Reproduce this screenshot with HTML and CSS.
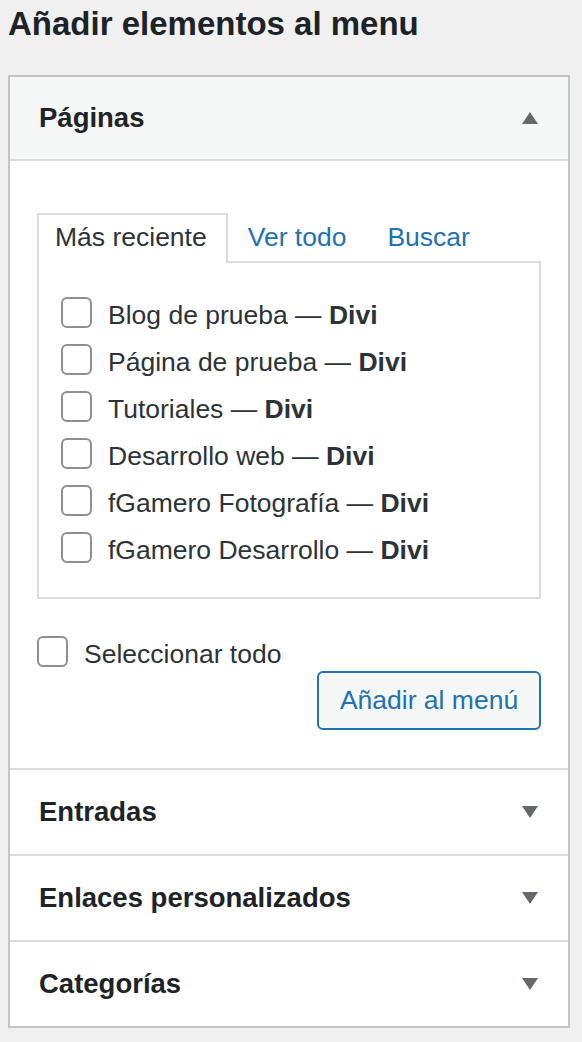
FILE: index.html
```html
<!DOCTYPE html>
<html lang="es">
<head>
<meta charset="utf-8">
<title>Añadir elementos al menu</title>
<link rel="stylesheet" href="styles.css">
</head>
<body>
<h1 class="title">Añadir elementos al menu</h1>
<div class="panel">
  <section class="section open">
    <div class="section-head head-open">
      <h3 class="section-title">Páginas</h3>
      <span class="arrow up"></span>
    </div>
    <div class="section-body">
      <div class="tabs">
        <span class="tab active">Más reciente</span>
        <a class="tab-link first" href="#">Ver todo</a>
        <a class="tab-link second" href="#">Buscar</a>
      </div>
      <div class="tab-panel">
        <ul class="list">
          <li class="item"><span class="box"></span><span class="label">Blog de prueba — <b>Divi</b></span></li>
          <li class="item"><span class="box"></span><span class="label">Página de prueba — <b>Divi</b></span></li>
          <li class="item"><span class="box"></span><span class="label">Tutoriales — <b>Divi</b></span></li>
          <li class="item"><span class="box"></span><span class="label">Desarrollo web — <b>Divi</b></span></li>
          <li class="item"><span class="box"></span><span class="label">fGamero Fotografía — <b>Divi</b></span></li>
          <li class="item"><span class="box"></span><span class="label">fGamero Desarrollo — <b>Divi</b></span></li>
        </ul>
      </div>
      <div class="select-all"><span class="box"></span><span class="label">Seleccionar todo</span></div>
      <div class="actions"><button class="button">Añadir al menú</button></div>
    </div>
  </section>
  <section class="section">
    <div class="section-head">
      <h3 class="section-title">Entradas</h3>
      <span class="arrow down"></span>
    </div>
  </section>
  <section class="section">
    <div class="section-head">
      <h3 class="section-title">Enlaces personalizados</h3>
      <span class="arrow down"></span>
    </div>
  </section>
  <section class="section last">
    <div class="section-head">
      <h3 class="section-title">Categorías</h3>
      <span class="arrow down"></span>
    </div>
  </section>
</div>
</body>
</html>
```
FILE: styles.css
```css
* { box-sizing: border-box; }

body {
  margin: 0;
  background: #f0f0f1;
  font-family: "Liberation Sans", Arial, sans-serif;
  color: #1d2327;
}

.title {
  margin: 0;
  padding: 7px 0 0 8px;
  font-size: 33px;
  line-height: 33px;
  font-weight: 700;
  color: #1d2327;
}

.panel {
  margin: 35px 0 0 8px;
  width: 562px;
  border: 2px solid #c3c4c7;
  background: #fff;
}

.section {
  border-bottom: 2px solid #dcdcde;
}

.section.last {
  border-bottom: none;
}

.section-head {
  height: 84px;
  display: flex;
  align-items: center;
  justify-content: space-between;
  padding: 0 30px 0 29px;
}

.head-open {
  height: 84px;
  background: #f6f7f7;
  border-bottom: 2px solid #dcdcde;
}

.section-title {
  margin: 0;
  font-size: 27.5px;
  font-weight: 700;
  color: #1d2327;
}

.arrow {
  width: 0;
  height: 0;
  border-left: 8px solid transparent;
  border-right: 8px solid transparent;
}

.arrow.up {
  border-bottom: 12px solid #646970;
}

.arrow.down {
  border-top: 12px solid #646970;
}

.section-body {
  padding: 52px 27px 38px 27px;
}

.tabs {
  display: flex;
  align-items: flex-start;
  height: 50px;
  position: relative;
  z-index: 1;
  margin-bottom: -2px;
}

.tab {
  height: 50px;
  display: flex;
  align-items: center;
  padding: 0 19px 3px 16px;
  border: 2px solid #dcdcde;
  border-bottom: none;
  background: #fff;
  font-size: 26.5px;
  color: #2c3338;
}

.tab-link {
  height: 48px;
  display: flex;
  align-items: center;
  font-size: 26.5px;
  color: #2271b1;
  text-decoration: none;
}

.tab-link.first { margin-left: 20px; }
.tab-link.second { margin-left: 41px; }

.tab-panel {
  border: 2px solid #dcdcde;
  padding: 26px 0 26px 22px;
}

.list {
  list-style: none;
  margin: 0;
  padding: 0;
}

.item {
  height: 47px;
  display: flex;
  align-items: center;
}

.box {
  flex: none;
  width: 31px;
  height: 31px;
  border: 2px solid #8c8f94;
  border-radius: 6px;
  background: #fff;
}

.label {
  margin-left: 16px;
  padding-top: 6px;
  font-size: 26.5px;
  color: #2c3338;
}

.label b {
  font-weight: 700;
}

.select-all {
  margin-top: 37px;
  height: 31px;
  display: flex;
  align-items: center;
}

.actions {
  display: flex;
  justify-content: flex-end;
  margin-top: 4px;
}

.button {
  height: 59px;
  width: 224px;
  border: 2px solid #2271b1;
  border-radius: 6px;
  background: #f6f7f7;
  color: #2271b1;
  font-family: "Liberation Sans", Arial, sans-serif;
  font-size: 26.5px;
  padding: 0;
}
```
